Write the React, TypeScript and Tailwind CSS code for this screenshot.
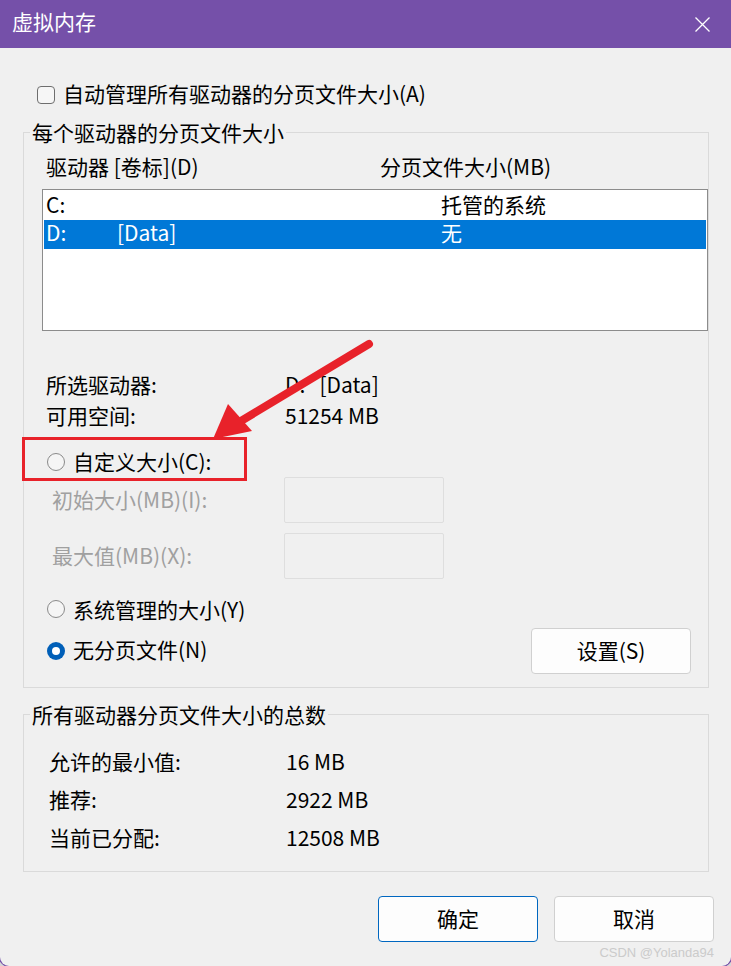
import React from 'react';

function Radio({ checked }: { checked?: boolean }) {
  if (checked) {
    return (
      <span className="flex h-[18px] w-[18px] shrink-0 items-center justify-center rounded-full bg-[#005fb8]">
        <span className="h-[8px] w-[8px] rounded-full bg-white" />
      </span>
    );
  }
  return <span className="h-[18px] w-[18px] shrink-0 rounded-full border border-[#8a8a8a] bg-[#f5f5f5]" />;
}

function InfoRow({ label, value }: { label: string; value: string }) {
  return (
    <div className="flex h-[31px] items-center pb-[2px]">
      <span className="w-[261px] pl-[22px]">{label}</span>
      <span className="whitespace-pre">{value}</span>
    </div>
  );
}

function TotalRow({ label, value }: { label: string; value: string }) {
  return (
    <div className="flex h-[38px] items-center pb-[3px]">
      <span className="w-[262px] pl-[25px]">{label}</span>
      <span>{value}</span>
    </div>
  );
}

function SizeInput({ label }: { label: string }) {
  return (
    <div className="flex h-[46px] items-center">
      <span className="w-[260px] pb-[2px] pl-[28px] text-[#a0a0a0]">{label}</span>
      <div className="h-[46px] w-[160px] rounded-[2px] border border-[#dedede] bg-[#f0f0f0]" />
    </div>
  );
}

export default function App() {
  return (
    <div className="h-[966px] w-[731px] overflow-hidden bg-[#d6d6d6] font-['Noto_Sans_CJK_SC',sans-serif] text-[21px] leading-[28px] text-black">
      <div className="relative ml-[-1px] flex h-[967px] w-[733px] flex-col rounded-b-[10px] border-x border-b border-[#7550a9] bg-[#f0f0f0]">
        {/* title bar */}
        <div className="flex h-[48px] items-start justify-between bg-[#7550a9] pl-[12px] pr-[21px] text-white">
          <span className="mt-[7px]">虚拟内存</span>
          <svg className="mt-[17px]" width="15" height="15" viewBox="0 0 15 15">
            <path d="M0.5 0.5 L14.5 14.5 M14.5 0.5 L0.5 14.5" stroke="white" strokeWidth="1.3" fill="none" />
          </svg>
        </div>

        <div className="flex flex-col pl-[23px] pr-[22px]">
          <div className="mt-[33px] flex h-[28px] items-center gap-[8px] pl-[14px]">
            <span className="h-[18px] w-[18px] rounded-[4px] border border-[#6e6e6e] bg-[#f6f6f6]" />
            <span className="pb-[4px]">自动管理所有驱动器的分页文件大小(A)</span>
          </div>

          <fieldset className="mt-[10px] border border-[#dadada] pb-[13px]">
            <legend className="ml-[6px] px-[2px] leading-[27px]">每个驱动器的分页文件大小</legend>

            <div className="mt-[8px] flex h-[28px] items-center pb-[4px]">
              <span className="w-[356px] pl-[22px]">驱动器 [卷标](D)</span>
              <span>分页文件大小(MB)</span>
            </div>

            <div className="ml-[18px] mt-[7px] h-[142px] border border-[#8c8c8c] bg-white px-[1px] pt-[2px]">
              <div className="flex h-[28px] items-center pb-[5px] pl-[2px]">
                <span className="w-[71px]">C:</span>
                <span className="w-[324px]" />
                <span>托管的系统</span>
              </div>
              <div className="flex h-[29px] items-center bg-[#0078d7] pb-[5px] pl-[2px] text-white">
                <span className="w-[71px]">D:</span>
                <span className="w-[324px]">[Data]</span>
                <span>无</span>
              </div>
            </div>

            <div className="mt-[38px]">
              <InfoRow label="所选驱动器:" value="D:   [Data]" />
              <InfoRow label="可用空间:" value="51254 MB" />
            </div>

            <div className="relative mt-[16px] flex h-[30px] items-center gap-[8px] pl-[23px]">
              <Radio />
              <span className="pb-[2px]">自定义大小(C):</span>
              <div className="absolute left-[-2px] top-[-10px] h-[44px] w-[225px] border-[3px] border-[#e8222a]" />
            </div>

            <SizeInput label="初始大小(MB)(I):" />
            <div className="mt-[10px]">
              <SizeInput label="最大值(MB)(X):" />
            </div>

            <div className="mt-[15px] flex h-[30px] items-center gap-[8px] pl-[23px]">
              <Radio />
              <span>系统管理的大小(Y)</span>
            </div>

            <div className="mt-[4px] flex h-[46px] items-center gap-[8px] pl-[23px] pr-[17px]">
              <Radio checked />
              <span className="pb-[4px]">无分页文件(N)</span>
              <button className="ml-auto h-[46px] w-[160px] rounded-[4px] border border-[#d0d0d0] bg-[#fdfdfd] pb-[2px]">
                设置(S)
              </button>
            </div>
          </fieldset>

          <fieldset className="mt-[13px] border border-[#dadada] pb-[14px]">
            <legend className="ml-[6px] px-[2px] leading-[27px]">所有驱动器分页文件大小的总数</legend>
            <div className="mt-[15px]">
              <TotalRow label="允许的最小值:" value="16 MB" />
              <TotalRow label="推荐:" value="2922 MB" />
              <TotalRow label="当前已分配:" value="12508 MB" />
            </div>
          </fieldset>

          <div className="mr-[-5px] mt-[24px] flex justify-end gap-[16px]">
            <button className="h-[46px] w-[160px] rounded-[4px] border border-[#0067c0] bg-[#fdfdfd] pb-[2px]">确定</button>
            <button className="h-[46px] w-[160px] rounded-[4px] border border-[#d0d0d0] bg-[#fdfdfd] pb-[2px]">取消</button>
          </div>
        </div>

        <span className="absolute bottom-[5px] right-[17px] font-['Liberation_Sans',sans-serif] text-[13px] leading-[16px] text-[#cbcbcb]">
          CSDN @Yolanda94
        </span>

        {/* red annotation arrow */}
        <svg className="pointer-events-none absolute left-0 top-0" width="731" height="966" viewBox="0 0 731 966">
          <line x1="369" y1="344" x2="236" y2="424" stroke="#e8222a" strokeWidth="8" strokeLinecap="round" />
          <polygon points="213,439 228,404 252,431" fill="#e8222a" />
        </svg>
      </div>
    </div>
  );
}
